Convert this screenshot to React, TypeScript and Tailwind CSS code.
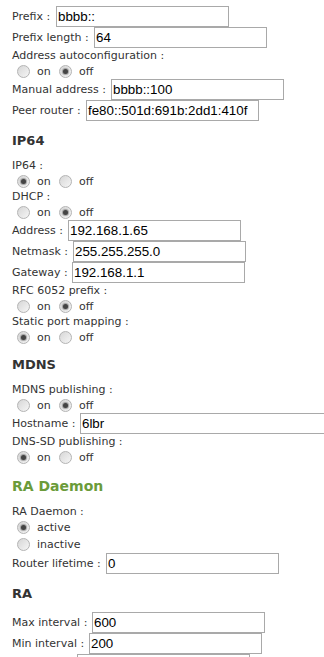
import React from "react";

const labelFont = { fontFamily: '"DejaVu Sans", Verdana, sans-serif' };

function Field({ label, lw, value, w = 173 }: { label: string; lw: number; value: string; w?: number }) {
  return (
    <div className="flex h-[21px] items-center">
      <span className="shrink-0 whitespace-nowrap text-[11px] leading-[15px] text-[#333]" style={{ width: lw }}>
        {label}
      </span>
      <div
        className="flex h-[21px] shrink-0 items-center border border-[#a9a9a9] bg-white pl-[1px] text-[13.33px] text-black font-['Liberation_Sans',Arial,sans-serif] whitespace-nowrap overflow-hidden"
        style={{ width: w }}
      >
        {value}
      </div>
    </div>
  );
}

function Label({ text }: { text: string }) {
  return <div className="h-[15px] whitespace-nowrap text-[11px] leading-[15px] text-[#333]">{text}</div>;
}

function Radio({ checked }: { checked?: boolean }) {
  return (
    <span className="flex h-[13px] w-[13px] shrink-0 items-center justify-center rounded-full border border-[#b4b4b4] bg-gradient-to-br from-[#d6d6d6] to-[#f6f6f6]">
      {checked && <span className="h-[5px] w-[5px] rounded-full bg-[#444] shadow-[0_0_1px_1px_rgba(90,90,90,0.5)]" />}
    </span>
  );
}

function OnOff({ on }: { on: boolean }) {
  return (
    <div className="flex h-[16px] items-center pl-[5px] text-[11px] leading-[15px] text-[#333]">
      <Radio checked={on} />
      <span className="ml-[7px] w-[22px]">on</span>
      <Radio checked={!on} />
      <span className="ml-[7px]">off</span>
    </div>
  );
}

function Heading({ text, green, mb = 9 }: { text: string; green?: boolean; mb?: number }) {
  return (
    <div
      className={
        green
          ? "mt-[12px] h-[18px] text-[14px] font-bold leading-[18px] text-[#6b9b3a]"
          : "mt-[12px] h-[16px] text-[13px] font-bold leading-[16px] text-[#333]"
      }
      style={{ marginBottom: mb }}
    >
      {text}
    </div>
  );
}

export default function App() {
  return (
    <div className="h-[657px] w-full overflow-hidden bg-white pl-[12px] pt-[6px]" style={labelFont}>
      <Field label="Prefix :" lw={44} value="bbbb::" />
      <Field label="Prefix length :" lw={82} value="64" />
      <Label text="Address autoconfiguration :" />
      <OnOff on={false} />
      <Field label="Manual address :" lw={99} value="bbbb::100" />
      <Field label="Peer router :" lw={74} value="fe80::501d:691b:2dd1:410f" />

      <Heading text="IP64" />
      <Label text="IP64 :" />
      <OnOff on={true} />
      <Label text="DHCP :" />
      <OnOff on={false} />
      <Field label="Address :" lw={56} value="192.168.1.65" />
      <Field label="Netmask :" lw={61} value="255.255.255.0" />
      <Field label="Gateway :" lw={60} value="192.168.1.1" />
      <Label text="RFC 6052 prefix :" />
      <OnOff on={false} />
      <Label text="Static port mapping :" />
      <OnOff on={true} />

      <Heading text="MDNS" />
      <Label text="MDNS publishing :" />
      <OnOff on={false} />
      <Field label="Hostname :" lw={68} value="6lbr" w={260} />
      <Label text="DNS-SD publishing :" />
      <OnOff on={true} />

      <Heading text="RA Daemon" green />
      <Label text="RA Daemon :" />
      <div className="flex h-[17px] items-center pl-[5px] text-[11px] leading-[15px] text-[#333]">
        <Radio checked />
        <span className="ml-[7px]">active</span>
      </div>
      <div className="flex h-[17px] items-center pl-[5px] text-[11px] leading-[15px] text-[#333]">
        <Radio />
        <span className="ml-[7px]">inactive</span>
      </div>
      <Field label="Router lifetime :" lw={94} value="0" />

      <Heading text="RA" mb={10} />
      <Field label="Max interval :" lw={80} value="600" />
      <Field label="Min interval :" lw={77} value="200" />
      <div className="flex h-[21px] items-start">
        <div className="w-[65px] shrink-0" />
        <div className="h-[21px] w-[173px] shrink-0 border border-[#a9a9a9] bg-white" />
      </div>
    </div>
  );
}
